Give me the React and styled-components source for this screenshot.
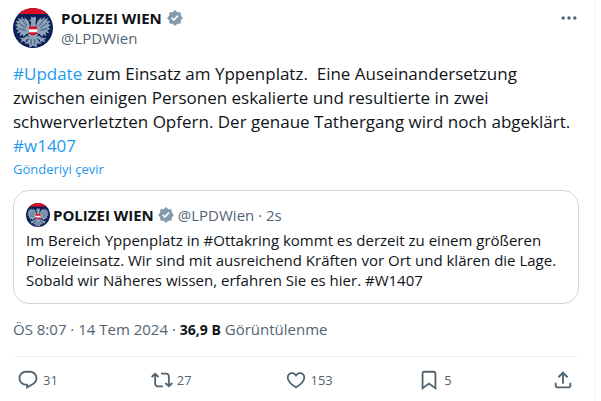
import { useId } from "react"
import { createGlobalStyle, styled } from "styled-components"

const COLORS = {
  text: "#0f1419",
  muted: "#536471",
  link: "#1d9bf0",
  line: "#eff3f4",
  cardBorder: "#cfd9de",
  badge: "#829aab",
}

const ICONS = {
  more: "M3 12c0-1.1.9-2 2-2s2 .9 2 2-.9 2-2 2-2-.9-2-2zm9 2c1.1 0 2-.9 2-2s-.9-2-2-2-2 .9-2 2 .9 2 2 2zm7 0c1.1 0 2-.9 2-2s-.9-2-2-2-2 .9-2 2 .9 2 2 2z",
  reply:
    "M1.751 10c0-4.42 3.584-8 8.005-8h4.366c4.49 0 8.129 3.64 8.129 8.13 0 2.96-1.607 5.68-4.196 7.11l-8.054 4.46v-3.69h-.067c-4.49.1-8.183-3.51-8.183-8.01zm8.005-6c-3.317 0-6.005 2.69-6.005 6 0 3.37 2.77 6.08 6.138 6.01l.351-.01h1.761v2.3l5.087-2.81c1.951-1.08 3.163-3.13 3.163-5.36 0-3.39-2.744-6.13-6.129-6.13H9.756z",
  repost:
    "M4.5 3.88l4.432 4.14-1.364 1.46L5.5 7.55V16c0 1.1.896 2 2 2H13v2H7.5c-2.209 0-4-1.79-4-4V7.55L1.432 9.48.068 8.02 4.5 3.88zM16.5 6H11V4h5.5c2.209 0 4 1.79 4 4v8.45l2.068-1.93 1.364 1.46-4.432 4.14-4.432-4.14 1.364-1.46 2.068 1.93V8c0-1.1-.896-2-2-2z",
  like: "M16.697 5.5c-1.222-.06-2.679.51-3.89 2.16l-.805 1.09-.806-1.09C9.984 6.01 8.526 5.44 7.304 5.5c-1.243.07-2.349.78-2.91 1.91-.552 1.12-.633 2.78.479 4.82 1.074 1.97 3.257 4.27 7.129 6.61 3.87-2.34 6.052-4.64 7.126-6.61 1.111-2.04 1.03-3.7.477-4.82-.561-1.13-1.666-1.84-2.908-1.91zm4.187 7.69c-1.351 2.48-4.001 5.12-8.379 7.67l-.503.3-.504-.3c-4.379-2.55-7.029-5.19-8.382-7.67-1.36-2.5-1.41-4.86-.514-6.67.887-1.79 2.647-2.91 4.601-3.01 1.651-.09 3.368.56 4.798 2.01 1.429-1.45 3.146-2.1 4.796-2.01 1.954.1 3.714 1.22 4.601 3.01.896 1.81.846 4.17-.514 6.67z",
  bookmark:
    "M4 4.5C4 3.12 5.119 2 6.5 2h11C18.881 2 20 3.12 20 4.5v18.44l-8-5.71-8 5.71V4.5zM6.5 4c-.276 0-.5.22-.5.5v14.56l6-4.29 6 4.29V4.5c0-.28-.224-.5-.5-.5h-11z",
  share:
    "M12 2.59l5.7 5.7-1.41 1.42L13 6.41V16h-2V6.41l-3.3 3.3-1.41-1.42L12 2.59zM21 15l-.02 3.51c0 1.38-1.12 2.49-2.5 2.49H5.5C4.11 21 3 19.88 3 18.5V15h2v3.5c0 .28.22.5.5.5h12.98c.28 0 .5-.22.5-.5L19 15h2z",
}

const ACTIONS = [
  { icon: "reply", label: "Yanıtla", count: "31" },
  { icon: "repost", label: "Yeniden gönder", count: "27" },
  { icon: "like", label: "Beğen", count: "153" },
  { icon: "bookmark", label: "Yer işareti", count: "5" },
  { icon: "share", label: "Paylaş" },
]

const GlobalStyle = createGlobalStyle`
  * {
    box-sizing: border-box;
  }

  body {
    margin: 0;
    background: #fff;
    color: ${COLORS.text};
    font-family: "Open Sans", "Noto Sans", sans-serif;
    font-size: 15px;
    line-height: 20px;
  }
`

const Post = styled.article`
  min-height: 100vh;
  margin-right: 5px;
  padding: 8px 16px 0 13px;
  border-right: 1px solid ${COLORS.line};
`

const Header = styled.header`
  display: flex;
  align-items: flex-start;
  gap: 8px;
`

const AvatarSvg = styled.svg`
  flex: none;
  width: ${(props) => props.$size}px;
  height: ${(props) => props.$size}px;
`

const Author = styled.div`
  display: flex;
  flex: 1;
  flex-direction: column;
`

const NameRow = styled.div`
  display: flex;
  align-items: center;
  gap: ${(props) => props.$gap || 4}px;
`

const Name = styled.span`
  font-weight: 700;
`

const Muted = styled.span`
  color: ${COLORS.muted};
`

const BadgeSvg = styled.svg`
  flex: none;
  width: 18px;
  height: 18px;
  fill: ${COLORS.badge};
`

const IconSvg = styled.svg`
  flex: none;
  width: ${(props) => props.$size}px;
  height: ${(props) => props.$size}px;
  fill: currentColor;
`

const IconButton = styled.button`
  display: flex;
  align-items: center;
  gap: 4px;
  padding: 0;
  border: 0;
  background: none;
  color: ${COLORS.muted};
  font: inherit;
  font-size: 13px;
  cursor: pointer;
`

const Body = styled.p`
  margin: 14px 0 0;
  font-size: 17px;
  line-height: 24px;
  white-space: pre-wrap;
`

const Link = styled.a`
  color: ${COLORS.link};
  text-decoration: none;
`

const Translate = styled.button`
  display: block;
  margin-top: 3px;
  padding: 0;
  border: 0;
  background: none;
  color: ${COLORS.link};
  font: inherit;
  font-size: 13px;
  line-height: 16px;
  cursor: pointer;
`

const Quote = styled.section`
  margin-top: 13px;
  padding: 12px 12px 13px;
  border: 1px solid ${COLORS.cardBorder};
  border-radius: 16px;
`

const QuoteText = styled.p`
  margin: 3px 0 0;
`

const Meta = styled.div`
  margin: 15px 0 16px;
  color: ${COLORS.muted};
`

const Views = styled.strong`
  color: ${COLORS.text};
  font-size: 14px;
  font-weight: 700;
`

const Actions = styled.footer`
  display: flex;
  padding: 12px 5px 12px 4px;
  border-top: 1px solid ${COLORS.line};
`

const Action = styled.div`
  flex: ${(props) => (props.$last ? "none" : 1)};
`

const Icon = ({ name, size = 22 }) => (
  <IconSvg viewBox="0 0 24 24" $size={size} aria-hidden="true">
    <path d={ICONS[name]} />
  </IconSvg>
)

const Badge = () => (
  <BadgeSvg viewBox="0 0 22 22" aria-hidden="true">
    <path
      fillRule="evenodd"
      d="M12.05 2.056c-.568-.608-1.532-.608-2.1 0l-1.393 1.49c-.284.303-.685.47-1.1.455L5.42 3.932c-.832-.028-1.514.654-1.486 1.486l.069 2.039c.014.415-.152.816-.456 1.1l-1.49 1.392c-.608.568-.608 1.533 0 2.101l1.49 1.393c.304.284.47.684.456 1.1l-.07 2.038c-.027.832.655 1.514 1.487 1.486l2.038-.069c.415-.014.816.152 1.1.455l1.392 1.49c.569.609 1.533.609 2.102 0l1.393-1.49c.283-.303.684-.47 1.099-.455l2.038.069c.832.028 1.515-.654 1.486-1.486L18 14.542c-.015-.415.152-.815.455-1.099l1.49-1.393c.608-.568.608-1.533 0-2.101l-1.49-1.393c-.303-.283-.47-.684-.455-1.1l.068-2.038c.029-.832-.654-1.514-1.486-1.486l-2.038.07c-.415.013-.816-.153-1.1-.456zm-5.817 9.367l1.429-1.371 1.94 2.014 4.282-4.656 1.457 1.342-5.716 6.22z"
    />
  </BadgeSvg>
)

const WING =
  "M17 18L15.5 13 11.5 9.2 11.8 12 8 8.6 8.8 11.8 4.6 9.8 6.3 13.2 2.6 12.8 4.8 16 1.8 17 4.8 18.8 2.4 21.5 5.8 21.8 3.6 25.4 7.6 24.3 6.5 28.3 10 26.3 10.3 29.3 13.5 26 16.5 25z"

// Austrian eagle with the red-white-red shield
const Avatar = ({ size }) => {
  const clip = useId()
  return (
    <AvatarSvg viewBox="0 0 40 40" $size={size} role="img" aria-label="POLIZEI WIEN">
      <clipPath id={clip}>
        <circle cx="20" cy="20" r="20" />
      </clipPath>
      <g clipPath={`url(#${clip})`}>
        <path fill="#0a1f55" d="M0 0h40v40H0z" />
        <path fill="#dc0f26" d="M0 0h40v6H0z" />
        <g fill="#8fa3b8">
          <path d={WING} />
          <path d={WING} transform="matrix(-1 0 0 1 40 0)" />
          <path d="M17.4 19L18.2 13.8 16 12.6 18.2 11 18 8.6 20 9.6 22 8.6 23.2 10.6 22.6 14 23 19z" />
          <path d="M15 26h10l-1.2 4.5 4.4 5.5-4-.6-.9 4.1-3.3-2-3.3 2-.9-4.1-4 .6 4.4-5.5z" />
          <path d="M14.5 27.5l-3.5 2.5-5-.2 3 2-1.6 2.8 3.6-1.5 1 2.4 1.4-3.8 3-1.5zM25.5 27.5l3.5 2.5 5-.2-3 2 1.6 2.8-3.6-1.5-1 2.4-1.4-3.8-3-1.5z" />
        </g>
        <path
          fill="none"
          stroke="#0a1f55"
          strokeWidth=".6"
          d="M13.8 18L9.5 12M12.8 20L6 15M12.5 22.5L5.8 20.3M27.5 22.5L34.2 20.3M27.2 20L34 15M26.2 18L30.5 12M18.2 31v5.5M21.8 31v5.5"
        />
        <path fill="#dc0f26" d="M16 18.5h8v6.5q-1 2-4 2.6-3-.6-4-2.6z" />
        <path fill="#fff" d="M16 21.3h8v3h-8z" />
      </g>
    </AvatarSvg>
  )
}

export default function App() {
  return (
    <>
      <GlobalStyle />
      <Post lang="de">
        <Header>
          <Avatar size={40} />
          <Author>
            <NameRow>
              <Name>POLIZEI WIEN</Name>
              <Badge />
            </NameRow>
            <Muted>@LPDWien</Muted>
          </Author>
          <IconButton type="button" aria-label="Daha fazla">
            <Icon name="more" size={20} />
          </IconButton>
        </Header>

        <Body>
          <Link href="#update">#Update</Link>
          {" zum Einsatz am Yppenplatz.  Eine Auseinandersetzung zwischen einigen Personen eskalierte und resultierte in zwei schwerverletzten Opfern. Der genaue Tathergang wird noch abgeklärt. "}
          <Link href="#w1407">#w1407</Link>
        </Body>
        <Translate type="button" lang="tr">
          Gönderiyi çevir
        </Translate>

        <Quote>
          <NameRow $gap={3}>
            <Avatar size={24} />
            <Name>POLIZEI WIEN</Name>
            <Badge />
            <Muted>@LPDWien · 2s</Muted>
          </NameRow>
          <QuoteText>
            Im Bereich Yppenplatz in #Ottakring kommt es derzeit zu einem größeren Polizeieinsatz. Wir
            sind mit ausreichend Kräften vor Ort und klären die Lage. Sobald wir Näheres wissen,
            erfahren Sie es hier. #W1407
          </QuoteText>
        </Quote>

        <Meta lang="tr">
          ÖS 8:07 · 14 Tem 2024 · <Views>36,9 B</Views> Görüntülenme
        </Meta>

        <Actions lang="tr">
          {ACTIONS.map(({ icon, label, count }) => (
            <Action key={icon} $last={!count}>
              <IconButton type="button" aria-label={count ? `${label}: ${count}` : label}>
                <Icon name={icon} />
                {count && <span>{count}</span>}
              </IconButton>
            </Action>
          ))}
        </Actions>
      </Post>
    </>
  )
}
